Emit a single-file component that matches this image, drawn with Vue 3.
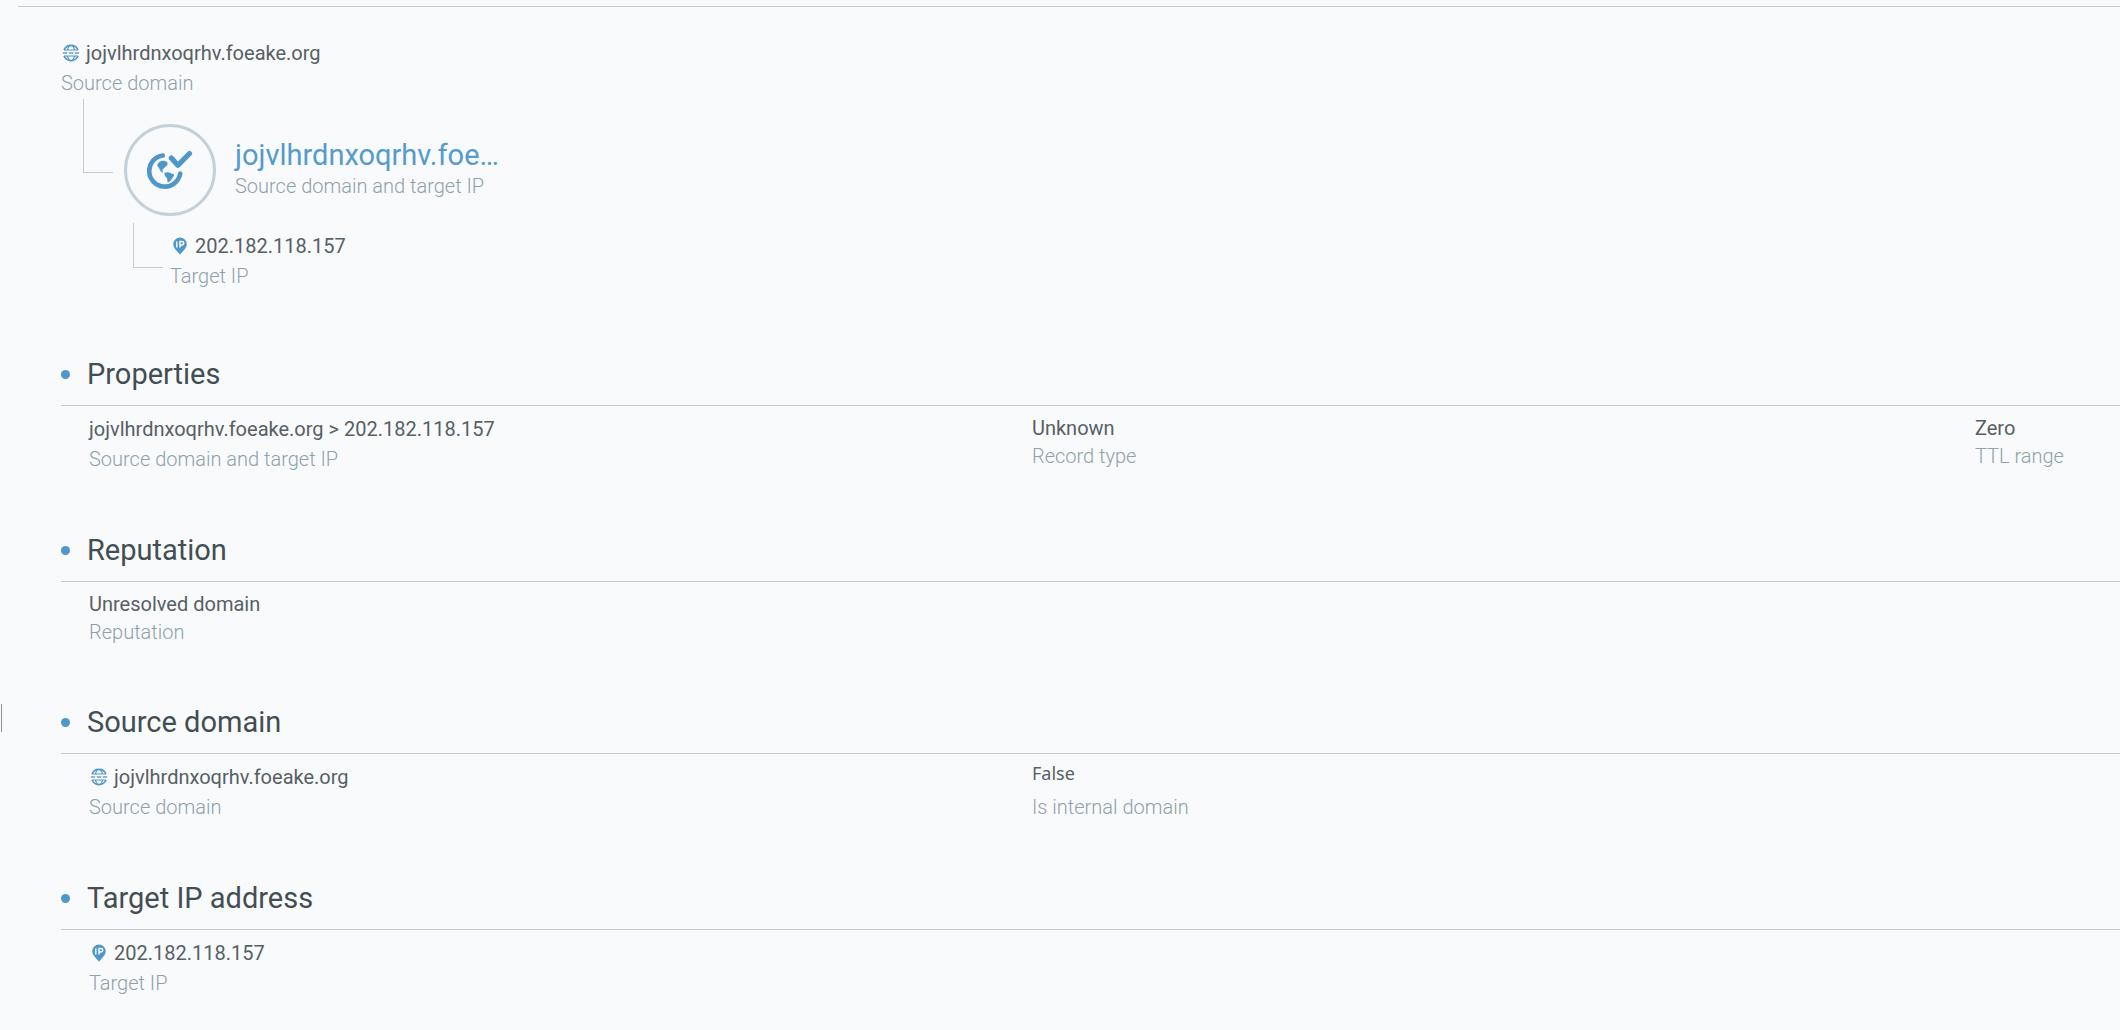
<script setup>
// Eigenschaften der Verbindung, nach Abschnitten gruppiert
const sections = [
  {
    title: 'Properties',
    fields: [
      { value: 'jojvlhrdnxoqrhv.foeake.org > 202.182.118.157', label: 'Source domain and target IP', size: 'tall' },
      { value: 'Unknown', label: 'Record type' },
      { value: 'Zero', label: 'TTL range' }
    ]
  },
  {
    title: 'Reputation',
    fields: [{ value: 'Unresolved domain', label: 'Reputation' }]
  },
  {
    title: 'Source domain',
    fields: [
      { value: 'jojvlhrdnxoqrhv.foeake.org', label: 'Source domain', icon: 'domain', size: 'tall' },
      { value: 'False', label: 'Is internal domain', size: 'flag' }
    ]
  },
  {
    title: 'Target IP address',
    fields: [{ value: '202.182.118.157', label: 'Target IP', icon: 'ip', size: 'tall' }]
  }
]

// Titel auf die maximale Länge kürzen
const TITLE_LENGTH = 19
const title = sections[0].fields[0].value.slice(0, TITLE_LENGTH) + '…'
</script>

<template>
  <!-- Symbole, die mehrfach verwendet werden -->
  <svg class="symbols" aria-hidden="true">
    <symbol id="icon-domain" viewBox="0 0 18 18">
      <g fill="none" stroke="#4f97c9">
        <path d="M2 6a7.600 7.600 0 0 1 14 0M2 12a7.600 7.600 0 0 0 14 0" stroke-width="1.600" />
        <path d="M5.500 6C6 3.500 7.300 1.600 9 1.500s3 2 3.500 4.500M5.500 12c.5 2.500 1.800 4.400 3.500 4.500s3-2 3.500-4.500" stroke-width="1.200" />
        <path d="M2 6h14M2 12h14" stroke-width="1" />
        <path d="M1 8l.9 2L3 8l1.100 2L5 8M7 8l.9 2L9 8l1.100 2L11 8M13 8l.9 2L15 8l1.100 2L17 8" stroke-width=".8" />
      </g>
    </symbol>
    <symbol id="icon-ip" viewBox="0 0 18 18">
      <path d="M9 .5a6.700 6.700 0 0 0-6.700 6.700C2.300 11.500 6 13.500 9 17.700c3-4.200 6.700-6.200 6.700-10.500A6.700 6.700 0 0 0 9 .5z" fill="#4f97c9" />
      <path d="M5.800 4.500v6M9 10.500v-6h2a1.700 1.700 0 0 1 0 3.500H9" fill="none" stroke="#fff" stroke-width="1.400" />
    </symbol>
  </svg>

  <main class="details">
    <span class="handle"></span>

    <header class="chain">
      <div class="field tall">
        <div class="value"><svg class="icon"><use href="#icon-domain" /></svg>jojvlhrdnxoqrhv.foeake.org</div>
        <div class="label">Source domain</div>
      </div>

      <div class="main-node">
        <span class="elbow"></span>
        <div class="circle">
          <svg viewBox="0 0 46 40">
            <g fill="none" stroke="#4f97c9" stroke-width="4.600" stroke-linecap="round">
              <path d="M15.800 5.500A15.600 15.600 0 1 0 33.200 23.500" />
              <path d="M24.300 8l6.500 7.300L42.500 3.500" stroke-width="5.200" stroke-linejoin="round" />
            </g>
            <path d="M10.200 15.500c.5-2.600 3-4.700 6-4.700 2.600.1 4.600.8 4.400 3.200-.1 1.600-1.400 1.800-2.200 2.800-.8 1-1.400 1.600-2.500 2.200-.7.500-.4 2 .3 3.700-2-.7-3.200-1.900-3.700-3.800-.300-1.300-1.500-2-2.300-3.400z" fill="#4f97c9" />
            <path d="M17.500 22.800c2.200-1 4.500-.6 6.400.4 1.600.7 3.400.7 3.100 2.200-.5 2-1.800 2.300-2.600 4-.6 1.400-2.300 2.300-3.500 3.300-.8-1.500-.3-3.200-1-4.500-.8-1.300-2.800-2.300-2.400-5.400z" fill="#4f97c9" />
          </svg>
        </div>
        <div>
          <h1>{{ title }}</h1>
          <div class="label">Source domain and target IP</div>
        </div>
      </div>

      <div class="target-node">
        <span class="elbow"></span>
        <div class="field tall">
          <div class="value"><svg class="icon"><use href="#icon-ip" /></svg>202.182.118.157</div>
          <div class="label">Target IP</div>
        </div>
      </div>
    </header>

    <section v-for="section in sections" :key="section.title">
      <h2>{{ section.title }}</h2>
      <div class="fields">
        <div v-for="field in section.fields" :key="field.label" class="field" :class="field.size">
          <div class="value">
            <svg v-if="field.icon" class="icon"><use :href="'#icon-' + field.icon" /></svg>{{ field.value }}
          </div>
          <div class="label">{{ field.label }}</div>
        </div>
      </div>
    </section>
  </main>
</template>

<style>
body {
  background: #f9fafc;
  overflow-x: hidden;
}
</style>

<style scoped>
.symbols {
  position: absolute;
  width: 0;
  height: 0;
}
.details {
  position: relative;
  margin: 6px 0 0 18px;
  padding: 31px 0 0 43px;
  border-top: 1px solid #c1ccd3;
  font-family: Roboto, sans-serif;
  font-size: 20px;
  color: #566065;
}
/* Griff am linken Fensterrand */
.handle {
  position: absolute;
  left: -17px;
  top: 697px;
  width: 1px;
  height: 28px;
  background: #8b9296;
}
.value,
.label {
  line-height: 28px;
  white-space: nowrap;
}
.value {
  display: flex;
  align-items: center;
}
.label {
  font-weight: 300;
  color: #8fa1a9;
}
.tall .value,
.tall .label {
  line-height: 30px;
}
.flag .value {
  font-family: "Noto Sans", sans-serif;
  font-size: 18px;
  line-height: 22px;
}
.flag .label {
  line-height: 46px;
}
.icon {
  width: 18px;
  height: 18px;
  margin: 0 6px 0 1px;
}
.chain {
  height: 305px;
}
.main-node {
  display: flex;
  align-items: center;
  height: 118px;
  padding-left: 22px;
}
.elbow {
  box-sizing: border-box;
  width: 30px;
  border: 1px solid #c1ccd3;
  border-width: 0 0 1px 1px;
}
.main-node .elbow {
  align-self: flex-start;
  height: 74px;
  margin: 1px 11px 0 0;
}
.circle {
  display: flex;
  box-sizing: border-box;
  align-items: center;
  justify-content: center;
  width: 92px;
  height: 92px;
  margin: 26px 19px 0 0;
  border: 3px solid #c5d1d8;
  border-radius: 50%;
}
.circle svg {
  width: 46px;
  height: 40px;
}
h1 {
  margin: 24px 0 0;
  font-size: 29px;
  font-weight: 400;
  line-height: 34px;
  color: #559bcb;
  white-space: nowrap;
}
.target-node {
  display: flex;
  gap: 7px;
  padding: 7px 0 0 72px;
}
.target-node .elbow {
  height: 45px;
}
.target-node .field {
  padding-top: 8px;
}
section {
  min-height: 176px;
}
section:nth-of-type(2) {
  min-height: 172px;
}
h2 {
  display: flex;
  align-items: center;
  margin: 0;
  border-bottom: 1px solid #c1ccd3;
  font-size: 29px;
  font-weight: 400;
  line-height: 62px;
  color: #434e53;
}
h2::before {
  width: 9px;
  height: 9px;
  margin-right: 17px;
  border-radius: 50%;
  background: #4f97c9;
  content: "";
}
.fields {
  display: grid;
  grid-template-columns: 13fr 13fr 2fr;
  padding: 8px 0 0 28px;
}
.field {
  min-width: 0;
}
</style>
